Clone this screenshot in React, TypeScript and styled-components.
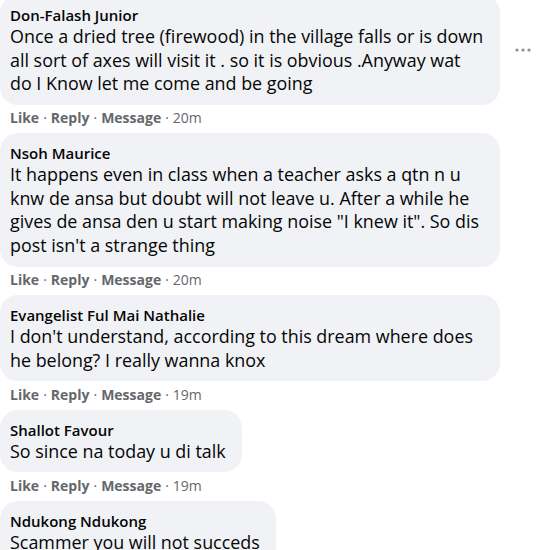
import styled, { createGlobalStyle } from "styled-components";

interface CommentData {
  author: string;
  text: string;
  time: string;
  hovered?: boolean;
}

const comments: CommentData[] = [
  {
    author: "Don-Falash Junior",
    text: "Once a dried tree (firewood) in the village falls or is down all sort of axes will visit it . so it is obvious .Anyway wat do I Know let me come and be going",
    time: "20m",
    hovered: true,
  },
  {
    author: "Nsoh Maurice",
    text: 'It happens even in class when a teacher asks a qtn n u knw de ansa but doubt will not leave u. After a while he gives de ansa den u start making noise "I knew it". So dis post isn\'t a strange thing',
    time: "20m",
  },
  {
    author: "Evangelist Ful Mai Nathalie",
    text: "I don't understand, according to this dream where does he belong? I really wanna knox",
    time: "19m",
  },
  {
    author: "Shallot Favour",
    text: "So since na today u di talk",
    time: "19m",
  },
  {
    author: "Ndukong Ndukong",
    text: "Scammer you will not succeds",
    time: "19m",
  },
];

export default function App() {
  return (
    <>
      <GlobalStyle />
      <Feed>
        {comments.map((c) => (
          <Comment key={c.author}>
            <BubbleRow>
              <Bubble>
                <Author>{c.author}</Author>
                <Body>{c.text}</Body>
              </Bubble>
              {c.hovered && (
                <MoreButton aria-label="More">
                  <svg width="16" height="4" viewBox="0 0 16 4">
                    <circle cx="2" cy="2" r="1.6" fill="#8a8d91" />
                    <circle cx="8" cy="2" r="1.6" fill="#8a8d91" />
                    <circle cx="14" cy="2" r="1.6" fill="#8a8d91" />
                  </svg>
                </MoreButton>
              )}
            </BubbleRow>
            <Actions>
              <ActionLink>Like</ActionLink>
              <Dot>·</Dot>
              <ActionLink>Reply</ActionLink>
              <Dot>·</Dot>
              <ActionLink>Message</ActionLink>
              <Dot>·</Dot>
              <Time>{c.time}</Time>
            </Actions>
          </Comment>
        ))}
      </Feed>
    </>
  );
}

const GlobalStyle = createGlobalStyle`
  html, body {
    margin: 0;
    padding: 0;
    background: #ffffff;
    overflow: hidden;
  }
  body {
    font-family: "Open Sans", "Noto Sans", sans-serif;
    color: #050505;
  }
`;

const Feed = styled.div`
  margin-top: -5px;
  display: flex;
  flex-direction: column;
`;

const Comment = styled.div`
  display: flex;
  flex-direction: column;
  align-items: flex-start;
`;

const BubbleRow = styled.div`
  display: flex;
  align-items: center;
`;

const Bubble = styled.div`
  box-sizing: border-box;
  background: #f0f2f5;
  border-radius: 18px;
  padding: 10px 16px 9px 10px;
  max-width: 500px;
`;

const Author = styled.div`
  font-size: 15px;
  font-weight: 600;
  line-height: 20px;
  color: #050505;
`;

const Body = styled.div`
  font-size: 17.9px;
  line-height: 23.6px;
  color: #050505;
`;

const MoreButton = styled.div`
  margin-left: 15px;
  width: 16px;
  height: 16px;
  display: flex;
  align-items: center;
  justify-content: center;
`;

const Actions = styled.div`
  box-sizing: border-box;
  display: flex;
  align-items: center;
  height: 28.5px;
  padding: 0 0 3px 10px;
  font-size: 14px;
  color: #65676b;
`;

const ActionLink = styled.span`
  font-weight: 700;
`;

const Dot = styled.span`
  margin: 0 4px;
`;

const Time = styled.span`
  font-weight: 400;
`;
